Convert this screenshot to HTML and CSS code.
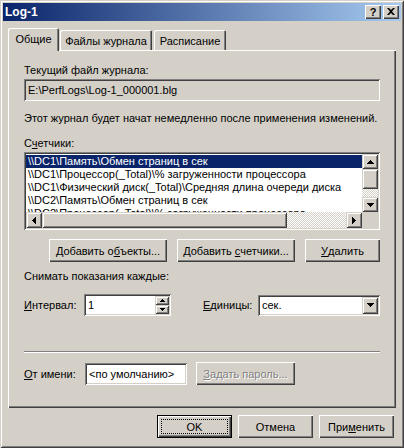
FILE: index.html
```html
<!DOCTYPE html>
<html lang="ru">
<head>
<meta charset="utf-8">
<title>Log-1</title>
<link rel="stylesheet" href="styles.css">
</head>
<body>
<div class="window">
  <div class="titlebar">
    <span class="title">Log-1</span>
    <div class="tbtns">
      <div class="tbtn q">?</div>
      <div class="tbtn x"><svg width="8" height="7" viewBox="0 0 8 7"><path d="M0 0h2l2 2 2-2h2L5 3.5 8 7H6L4 5 2 7H0l3-3.5z" fill="#000"/></svg></div>
    </div>
  </div>
  <div class="client">
    <div class="tabs">
      <div class="tab sel">Общие</div>
      <div class="tab t2">Файлы журнала</div>
      <div class="tab t3">Расписание</div>
    </div>
    <div class="panel">
      <div class="lbl">Текущий файл журнала:</div>
      <div class="field ro">E:\PerfLogs\Log-1_000001.blg</div>
      <div class="lbl l2">Этот журнал будет начат немедленно после применения изменений.</div>
      <div class="lbl l3">С<u>ч</u>етчики:</div>
      <div class="listbox">
        <div class="lb-main">
          <div class="items">
            <div class="item sel">\\DC1\Память\Обмен страниц в сек</div>
            <div class="item">\\DC1\Процессор(_Total)\% загруженности процессора</div>
            <div class="item">\\DC1\Физический диск(_Total)\Средняя длина очереди диска</div>
            <div class="item">\\DC2\Память\Обмен страниц в сек</div>
            <div class="item">\\DC2\Процессор(_Total)\% загруженности процессора</div>
          </div>
          <div class="vscroll">
            <div class="sbtn vb"><svg width="7" height="4" viewBox="0 0 7 4"><path d="M3 0h1v1h1v1h1v1h1v1H0V3h1V2h1V1h1z"/></svg></div>
            <div class="sthumb vthumb"></div>
            <div class="strack"></div>
            <div class="sbtn vb"><svg width="7" height="4" viewBox="0 0 7 4"><path d="M0 0h7v1H6v1H5v1H4v1H3V3H2V2H1V1H0z"/></svg></div>
          </div>
        </div>
        <div class="hrow">
          <div class="hscroll">
            <div class="sbtn hb"><svg width="4" height="7" viewBox="0 0 4 7"><path d="M3 0h1v7H3V6H2V5H1V4H0V3h1V2h1V1h1z"/></svg></div>
            <div class="sthumb hthumb"></div>
            <div class="strack"></div>
            <div class="sbtn hb"><svg width="4" height="7" viewBox="0 0 4 7"><path d="M0 0h1v1h1v1h1v1h1v1H3v1H2v1H1v1H0z"/></svg></div>
          </div>
          <div class="corner"></div>
        </div>
      </div>
      <div class="btnrow">
        <div class="btn wide">Добавить&nbsp;о<u>б</u>ъекты...</div>
        <div class="btn wide">Добавить&nbsp;<u>с</u>четчики...</div>
        <div class="btn"><u>У</u>далить</div>
      </div>
      <div class="lbl l4">Снимать показания каждые:</div>
      <div class="row irow">
        <span class="rlbl lint"><u>И</u>нтервал:</span>
        <div class="spin">
          <span class="val">1</span>
          <div class="spinbtns">
            <div class="sbtn sp"><svg width="5" height="3" viewBox="0 0 5 3"><path d="M2 0h1v1h1v1h1v1H0V2h1V1h1z"/></svg></div>
            <div class="sbtn sp"><svg width="5" height="3" viewBox="0 0 5 3"><path d="M0 0h5v1H4v1H3v1H2V2H1V1H0z"/></svg></div>
          </div>
        </div>
        <span class="rlbl lunit"><u>Е</u>диницы:</span>
        <div class="combo">
          <span class="val">сек.</span>
          <div class="sbtn cb"><svg width="7" height="4" viewBox="0 0 7 4"><path d="M0 0h7v1H6v1H5v1H4v1H3V3H2V2H1V1H0z"/></svg></div>
        </div>
      </div>
      <div class="sep"></div>
      <div class="row rrow">
        <span class="rlbl lrun"><u>О</u>т имени:</span>
        <div class="field user">&lt;по умолчанию&gt;</div>
        <div class="btn dis pw"><span><u>З</u>адать пароль...</span></div>
      </div>
    </div>
    <div class="dlgbtns">
      <div class="btn def"><span class="focus">OK</span></div>
      <div class="btn">Отмена</div>
      <div class="btn">При<u>м</u>енить</div>
    </div>
  </div>
</div>
</body>
</html>
```
FILE: styles.css
```css
body {
  margin: 0;
  background: #d4d0c8;
  font-family: "Liberation Sans", Arial, sans-serif;
  font-size: 11px;
  color: #000;
}
u { text-decoration: underline; text-underline-offset: 1px; }

.window {
  width: 404px;
  height: 448px;
  box-sizing: border-box;
  padding: 3px;
  background: #d4d0c8;
  box-shadow: inset 1px 1px #d4d0c8, inset -1px -1px #404040, inset 2px 2px #fff, inset -2px -2px #808080;
  display: flex;
  flex-direction: column;
}

.titlebar {
  height: 18px;
  flex: none;
  display: flex;
  align-items: center;
  padding: 0 2px;
  background: linear-gradient(to right, #0a246a, #a6caf0);
  color: #fff;
  font-weight: bold;
}
.title { flex: 1; line-height: 18px; font-size: 12px; }
.tbtns { display: flex; gap: 2px; }
.tbtn {
  width: 16px;
  height: 14px;
  box-sizing: border-box;
  background: #d4d0c8;
  box-shadow: inset 1px 1px #fff, inset -1px -1px #404040, inset -2px -2px #808080;
  display: flex;
  align-items: center;
  justify-content: center;
  color: #000;
  font-weight: bold;
  font-size: 11px;
  line-height: 14px;
}
.tbtn.x svg { margin-top: -1px; }

.client {
  flex: 1;
  margin-top: 1px;
  display: flex;
  flex-direction: column;
}

.tabs {
  display: flex;
  align-items: flex-end;
  margin-top: 6px;
  padding-left: 5px;
  height: 22px;
}
.tab {
  height: 20px;
  box-sizing: border-box;
  display: flex;
  align-items: center;
  justify-content: center;
  padding-top: 1px;
  background: #d4d0c8;
  border-radius: 2px 2px 0 0;
  box-shadow: inset 1px 1px #fff, inset -1px 0 #404040, inset -2px 0 #808080;
  white-space: nowrap;
}
.tab.sel {
  width: 51px;
  height: 23px;
  margin-bottom: -1px;
  position: relative;
  z-index: 1;
  padding-top: 0;
  padding-bottom: 1px;
}
.tab.t2 { width: 92px; margin-left: 1px; }
.tab.t3 { width: 72px; margin-left: 2px; }

.panel {
  margin-left: 5px;
  width: 388px;
  height: 358px;
  box-sizing: border-box;
  padding: 14px 16px 0 16px;
  box-shadow: inset 1px 1px #fff, inset -1px -1px #404040, inset -2px -2px #808080;
  display: flex;
  flex-direction: column;
}

.lbl { height: 13px; line-height: 13px; white-space: nowrap; }
.l2 { margin-top: 11px; }
.l3 { margin-top: 12px; }
.l4 { margin-top: 8px; }

.field {
  height: 22px;
  box-sizing: border-box;
  padding: 0 4px;
  line-height: 22px;
  background: #fff;
  white-space: nowrap;
  box-shadow: inset 1px 1px #808080, inset -1px -1px #fff, inset 2px 2px #404040, inset -2px -2px #d4d0c8;
}
.field.ro { margin-top: 2px; background: #d4d0c8; }

.listbox {
  margin-top: 2px;
  height: 78px;
  box-sizing: border-box;
  padding: 2px;
  background: #fff;
  box-shadow: inset 1px 1px #808080, inset -1px -1px #fff, inset 2px 2px #404040, inset -2px -2px #d4d0c8;
  display: flex;
  flex-direction: column;
}
.lb-main { flex: 1; display: flex; min-height: 0; }
.items { flex: 1; overflow: hidden; padding-top: 1px; }
.item { height: 13px; line-height: 13px; padding-left: 2px; white-space: nowrap; }
.item.sel { background: #0a246a; color: #fff; }

.vscroll, .hscroll, .strack {
  background: repeating-conic-gradient(#fff 0 25%, #d4d0c8 0 50%) 0 0 / 2px 2px;
}
.vscroll { width: 16px; display: flex; flex-direction: column; }
.hrow { display: flex; height: 16px; flex: none; }
.hscroll { flex: 1; display: flex; }
.corner { width: 16px; background: #d4d0c8; }
.strack { flex: 1; }

.sbtn, .sthumb, .btn {
  box-sizing: border-box;
  background: #d4d0c8;
  box-shadow: inset 1px 1px #d4d0c8, inset -1px -1px #404040, inset 2px 2px #fff, inset -2px -2px #808080;
}
.sbtn { display: flex; align-items: center; justify-content: center; flex: none; }
.sbtn svg { fill: #000; display: block; }
.vb { height: 15px; width: 16px; }
.vthumb { height: 20px; }
.hb { width: 16px; height: 16px; }
.hthumb { width: 245px; }

.btnrow {
  margin-top: 9px;
  display: flex;
  justify-content: flex-end;
  gap: 10px;
}
.btn {
  width: 75px;
  height: 23px;
  display: flex;
  align-items: center;
  justify-content: center;
  white-space: nowrap;
  box-shadow: inset 1px 1px #fff, inset -1px -1px #404040, inset -2px -2px #808080;
}
.btn.wide { width: 118px; }

.row { display: flex; align-items: center; }
.rlbl { white-space: nowrap; }
.irow { margin-top: 11px; height: 22px; }
.lint { width: 60px; }
.spin {
  width: 87px;
  height: 22px;
  box-sizing: border-box;
  padding: 2px;
  background: #fff;
  display: flex;
  box-shadow: inset 1px 1px #808080, inset -1px -1px #fff, inset 2px 2px #404040, inset -2px -2px #d4d0c8;
}
.val { flex: 1; line-height: 18px; padding-left: 2px; white-space: nowrap; }
.spinbtns { width: 14px; display: flex; flex-direction: column; }
.sp { height: 9px; width: 14px; }
.lunit { margin-left: 32px; width: 55px; }
.combo {
  width: 122px;
  height: 21px;
  box-sizing: border-box;
  padding: 2px;
  background: #fff;
  display: flex;
  box-shadow: inset 1px 1px #808080, inset -1px -1px #fff, inset 2px 2px #404040, inset -2px -2px #d4d0c8;
}
.combo .val { line-height: 17px; }
.cb { width: 16px; height: 17px; }

.sep {
  margin-top: 35px;
  height: 1px;
  border-top: 1px solid #808080;
  background: #fff;
}

.rrow { margin-top: 9px; height: 23px; }
.lrun { width: 61px; }
.field.user { width: 102px; }
.pw { width: 99px; margin-left: 9px; }
.btn.dis { color: #808080; text-shadow: 1px 1px #fff; }

.dlgbtns {
  margin-top: 7px;
  padding-right: 7px;
  display: flex;
  justify-content: flex-end;
  gap: 6px;
}
.btn.def {
  position: relative;
  box-shadow: inset 0 0 0 1px #000, inset 2px 2px #fff, inset -2px -2px #404040, inset -3px -3px #808080;
}
.btn.def .focus::after {
  content: "";
  position: absolute;
  inset: 4px;
  border: 1px dotted #000;
}
```
